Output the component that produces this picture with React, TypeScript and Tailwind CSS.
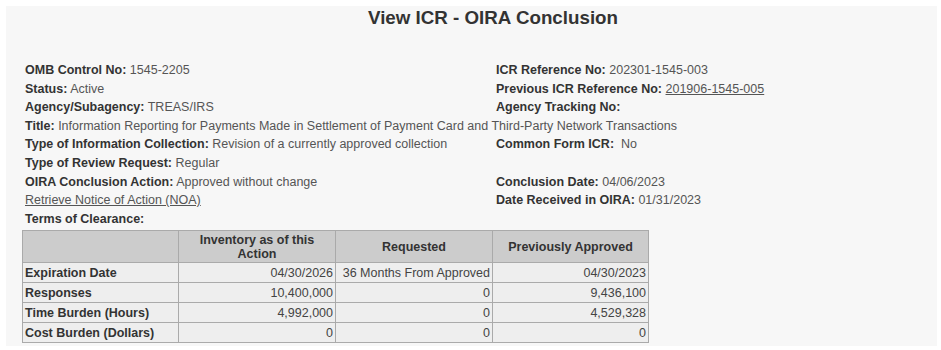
import React from 'react';

const rows: { left?: [string, string, boolean?]; right?: [string, string, boolean?]; full?: [string, string] ; link?: string }[] = [
  { left: ['OMB Control No:', '1545-2205'], right: ['ICR Reference No:', '202301-1545-003'] },
  { left: ['Status:', 'Active'], right: ['Previous ICR Reference No:', '201906-1545-005', true] },
  { left: ['Agency/Subagency:', 'TREAS/IRS'], right: ['Agency Tracking No:', ''] },
  { full: ['Title:', 'Information Reporting for Payments Made in Settlement of Payment Card and Third-Party Network Transactions'] },
  { left: ['Type of Information Collection:', 'Revision of a currently approved collection'], right: ['Common Form ICR:', '\u00a0No'] },
  { left: ['Type of Review Request:', 'Regular'] },
  { left: ['OIRA Conclusion Action:', 'Approved without change'], right: ['Conclusion Date:', '04/06/2023'] },
  { link: 'Retrieve Notice of Action (NOA)', right: ['Date Received in OIRA:', '01/31/2023'] },
  { left: ['Terms of Clearance:', ''] },
];

const tableRows = [
  ['Expiration Date', '04/30/2026', '36 Months From Approved', '04/30/2023'],
  ['Responses', '10,400,000', '0', '9,436,100'],
  ['Time Burden (Hours)', '4,992,000', '0', '4,529,328'],
  ['Cost Burden (Dollars)', '0', '0', '0'],
];

function Field({ label, value, link }: { label: string; value: string; link?: boolean }) {
  return (
    <span>
      <span className="font-bold text-[#333]">{label}</span>{' '}
      <span className={link ? 'text-[#555] underline' : 'text-[#555]'}>{value}</span>
    </span>
  );
}

export default function App() {
  return (
    <div className="w-[941px] h-[350px] bg-white pl-[6px] pr-[4px] pt-[6px] pb-[4px] font-['Liberation_Sans',Arial,sans-serif]">
      <div className="h-full bg-[#f7f7f7] pl-[19px]">
        <h1 className="pl-[24px] text-center text-[18.75px] leading-[24px] font-bold text-[#333]">View ICR - OIRA Conclusion</h1>

        <div className="mt-[31px] text-[12.5px] leading-[18.6px]">
          {rows.map((r, i) => (
            <div key={i} className="flex h-[18.6px] whitespace-nowrap">
              {r.full ? (
                <Field label={r.full[0]} value={r.full[1]} />
              ) : (
                <>
                  <div className="w-[471px]">
                    {r.left && <Field label={r.left[0]} value={r.left[1]} link={r.left[2]} />}
                    {r.link && <span className="text-[#555] underline">{r.link}</span>}
                  </div>
                  <div>{r.right && <Field label={r.right[0]} value={r.right[1]} link={r.right[2]} />}</div>
                </>
              )}
            </div>
          ))}
        </div>

        <table className="-ml-[3px] mt-[2px] border-collapse text-[12.5px] leading-[14px]">
          <thead>
            <tr className="bg-[#cccccc] h-[32px]">
              <th className="w-[156px] border border-[#aaaaaa]"></th>
              <th className="w-[157px] border border-[#aaaaaa] font-bold text-[#333] px-[4px]">Inventory as of this<br />Action</th>
              <th className="w-[157px] border border-[#aaaaaa] font-bold text-[#333]">Requested</th>
              <th className="w-[156px] border border-[#aaaaaa] font-bold text-[#333]">Previously Approved</th>
            </tr>
          </thead>
          <tbody>
            {tableRows.map((row) => (
              <tr key={row[0]} className="bg-[#eeeeee] h-[20px]">
                <td className="border border-[#aaaaaa] px-[2px] font-bold text-[#333]">{row[0]}</td>
                <td className="border border-[#aaaaaa] px-[2px] text-right text-[#444]">{row[1]}</td>
                <td className="border border-[#aaaaaa] px-[2px] text-right text-[#444] whitespace-nowrap">{row[2]}</td>
                <td className="border border-[#aaaaaa] px-[2px] text-right text-[#444]">{row[3]}</td>
              </tr>
            ))}
          </tbody>
        </table>
      </div>
    </div>
  );
}
